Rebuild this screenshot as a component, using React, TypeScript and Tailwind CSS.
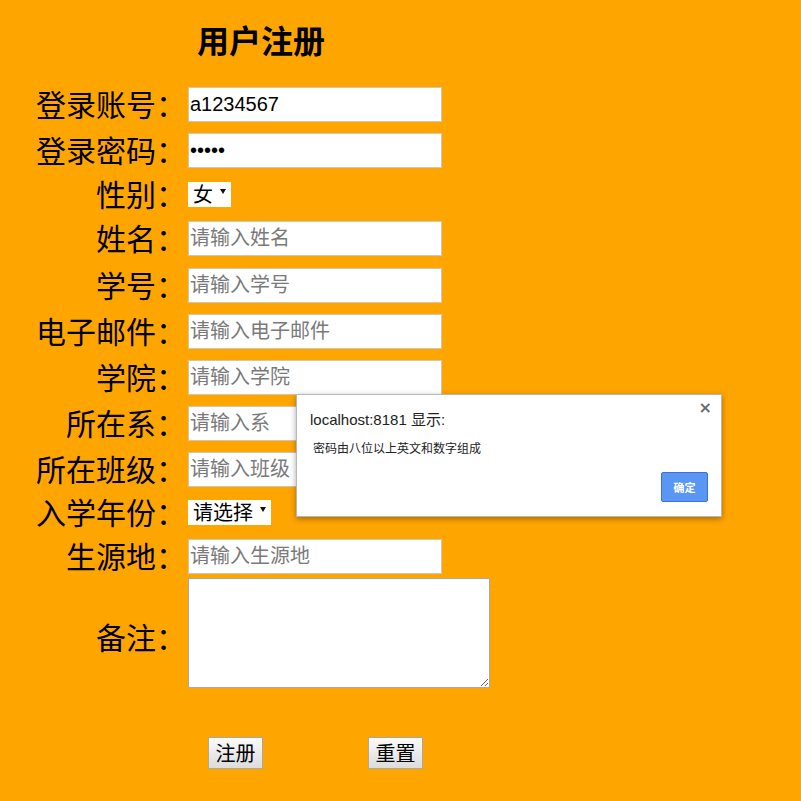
import React from "react";

const CJK = '"Liberation Sans", "Noto Sans CJK SC", sans-serif';

function Label({ text, extra = "-mt-[3px]" }: { text: string; extra?: string }) {
  return (
    <div
      className={`w-[186px] shrink-0 text-right text-[30px] leading-none text-black ${extra}`}
      style={{ fontFamily: '"Noto Sans CJK SC", sans-serif' }}
    >
      {text}
    </div>
  );
}

function TextInput({ value, placeholder, type = "text" }: { value?: string; placeholder?: string; type?: string }) {
  return (
    <input
      type={type}
      defaultValue={value}
      placeholder={placeholder}
      readOnly
      className="ml-[2px] w-[254px] h-[35px] border border-[#cfc6b8] bg-white px-[1px] text-[20px] text-black outline-none placeholder:text-[#7a7a7a]"
      style={{ fontFamily: CJK }}
    />
  );
}

function FakeSelect({ text, width }: { text: string; width: string }) {
  return (
    <div
      className={`ml-[2px] ${width} h-[25px] bg-white flex items-center pl-[5px] text-[20px] text-black leading-none`}
      style={{ fontFamily: '"Noto Sans CJK SC", sans-serif' }}
    >
      <span className="-mt-[1px]">{text}</span>
      <svg width="6" height="5" viewBox="0 0 6 5" className="ml-[7px] -mt-[6px]">
        <polygon points="0,0 6,0 3,5" fill="#111" />
      </svg>
    </div>
  );
}

export default function App() {
  const inputRow = "flex items-center h-[46px]";
  return (
    <div className="relative w-[801px] h-[801px] bg-[#ffa500] overflow-hidden" style={{ fontFamily: CJK }}>
      <div className="pt-[16px]">
        <div
          className="ml-[30px] w-[462px] h-[46px] text-center text-[32px] leading-[46px] font-bold text-black"
          style={{ fontFamily: '"Noto Sans CJK SC", sans-serif' }}
        >
          用户注册
        </div>
        <div className="mt-[19px] flex flex-col">
          <div className={inputRow}>
            <Label text="登录账号：" />
            <TextInput value="a1234567" />
          </div>
          <div className={inputRow}>
            <Label text="登录密码：" />
            <TextInput type="password" value="12345" />
          </div>
          <div className="flex items-center h-[42px]">
            <Label text="性别：" />
            <FakeSelect text="女" width="w-[43px]" />
          </div>
          <div className="flex items-center h-[47px]">
            <Label text="姓名：" />
            <TextInput placeholder="请输入姓名" />
          </div>
          <div className={inputRow}>
            <Label text="学号：" />
            <TextInput placeholder="请输入学号" />
          </div>
          <div className={inputRow}>
            <Label text="电子邮件：" />
            <TextInput placeholder="请输入电子邮件" />
          </div>
          <div className={inputRow}>
            <Label text="学院：" />
            <TextInput placeholder="请输入学院" />
          </div>
          <div className={inputRow}>
            <Label text="所在系：" />
            <TextInput placeholder="请输入系" />
          </div>
          <div className={inputRow}>
            <Label text="所在班级：" />
            <TextInput placeholder="请输入班级" />
          </div>
          <div className="flex items-center h-[41px]">
            <Label text="入学年份：" />
            <FakeSelect text="请选择" width="w-[83px]" />
          </div>
          <div className={inputRow}>
            <Label text="生源地：" />
            <TextInput placeholder="请输入生源地" />
          </div>
          <div className="flex items-center h-[110px] -mt-[1px]">
            <Label text="备注：" extra="mt-[5px]" />
            <textarea
              readOnly
              className="ml-[2px] w-[302px] h-[110px] border border-[#a9a9a9] bg-white outline-none"
            />
          </div>
          <div className="mt-[49px] flex items-center">
            <button
              className="ml-[208px] w-[55px] h-[32px] border border-[#a8a8a8] bg-gradient-to-b from-[#fafafa] to-[#dcdcdc] text-[20px] text-black leading-none"
              style={{ fontFamily: '"Noto Sans CJK SC", sans-serif' }}
            >
              注册
            </button>
            <button
              className="ml-[105px] w-[55px] h-[32px] border border-[#a8a8a8] bg-gradient-to-b from-[#fafafa] to-[#dcdcdc] text-[20px] text-black leading-none"
              style={{ fontFamily: '"Noto Sans CJK SC", sans-serif' }}
            >
              重置
            </button>
          </div>
        </div>
      </div>

      {/* alert dialog */}
      <div className="absolute left-[296px] top-[394px] w-[426px] h-[123px] bg-white border border-[#b8b8b8] shadow-[0_2px_6px_rgba(0,0,0,0.35)]">
        <div className="absolute right-[9px] top-[5px] text-[16px] font-bold text-[#6a6a6a] leading-none" style={{ fontFamily: '"DejaVu Sans", sans-serif' }}>
          ×
        </div>
        <div className="pl-[13px] pt-[16px] text-[15px] leading-[18px] text-[#222]" style={{ fontFamily: CJK }}>
          localhost:8181 显示:
        </div>
        <div className="pl-[16px] pt-[11px] text-[12px] leading-[16px] text-[#222]" style={{ fontFamily: '"Noto Sans CJK SC", sans-serif' }}>
          密码由八位以上英文和数字组成
        </div>
        <div className="absolute left-[364px] top-[77px] w-[47px] h-[30px] rounded-[2px] border border-[#3d73d0] bg-[#5a97f5] flex items-center justify-center text-[11px] font-bold text-white" style={{ fontFamily: '"Noto Sans CJK SC", sans-serif' }}>
          确定
        </div>
      </div>
    </div>
  );
}
